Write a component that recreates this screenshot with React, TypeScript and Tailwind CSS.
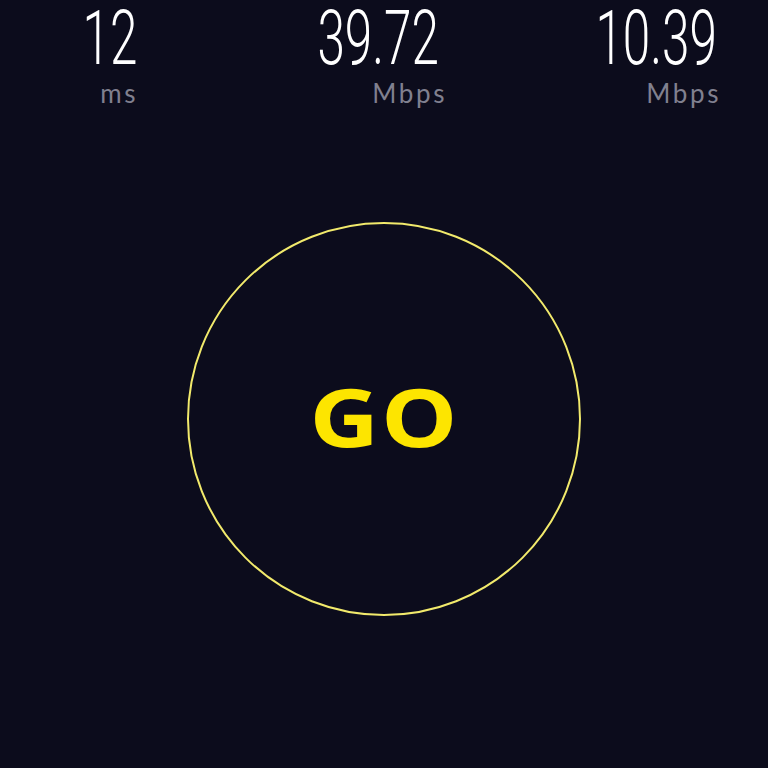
import React from "react";

const stats = [
  { value: "12", unit: "ms", nudge: "mr-[1px]" },
  { value: "39.72", unit: "Mbps", nudge: "mr-[8px]" },
  { value: "10.39", unit: "Mbps", nudge: "mr-[4px]" },
];

const App = () => {
  return (
    <div className="w-[768px] h-[768px] bg-[#0c0c1c] overflow-hidden flex flex-col">
      {/* result row */}
      <div className="grid grid-cols-[138px_309px_274px]">
        {stats.map((s, i) => (
          <div key={i} className="flex flex-col items-end">
            <span
              className={`inline-block origin-right scale-x-[0.65] text-[76px] leading-none font-light text-white whitespace-nowrap ${s.nudge}`}
              style={{ fontFamily: "Roboto, sans-serif" }}
            >
              {s.value}
            </span>
            <span
              className="mt-[4px] text-[26px] leading-[26px] tracking-[0.1em] text-[#80808f]"
              style={{ fontFamily: "Lato, sans-serif" }}
            >
              {s.unit}
            </span>
          </div>
        ))}
      </div>

      {/* start button */}
      <div className="mt-[116px] flex justify-center">
        <button className="w-[394px] h-[394px] rounded-full border-2 border-[#f2ea6c] flex items-center justify-center">
          <span
            className="inline-block mb-[6px] scale-x-[1.2] text-[80px] leading-none font-bold text-[#fde500] tracking-[0.02em]"
            style={{ fontFamily: "'Open Sans', sans-serif" }}
          >
            GO
          </span>
        </button>
      </div>
    </div>
  );
};

export default App;
